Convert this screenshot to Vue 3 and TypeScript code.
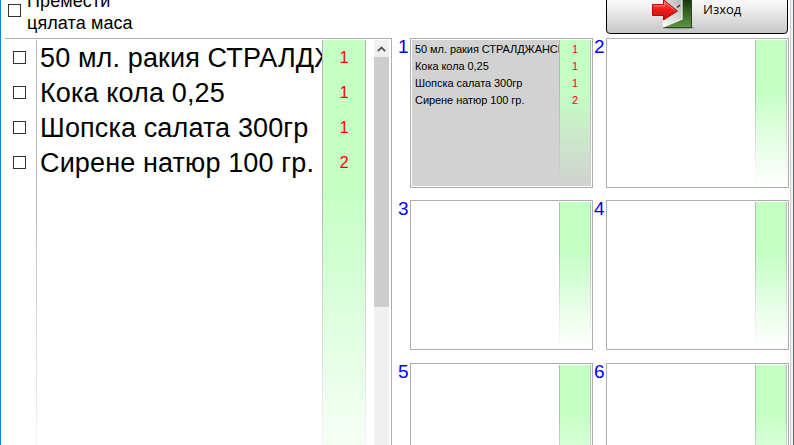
<script setup lang="ts">
interface OrderItem {
  name: string
  qty: number
}

interface Split {
  id: number
  items: OrderItem[]
}

const items: OrderItem[] = [
  { name: '50 мл. ракия СТРАЛДЖАНСКА', qty: 1 },
  { name: 'Кока кола 0,25', qty: 1 },
  { name: 'Шопска салата 300гр', qty: 1 },
  { name: 'Сирене натюр 100 гр.', qty: 2 },
]

const splits: Split[] = [1, 2, 3, 4, 5, 6].map((id) => ({ id, items: id === 1 ? items : [] }))
</script>

<template>
  <div class="window">
    <section class="left">
      <label class="move-all">
        <span class="box"></span>
        <span class="move-text">Премести<br />цялата маса</span>
      </label>
      <div class="order">
        <div class="checks">
          <div v-for="item in items" :key="item.name" class="check-row"><span class="box"></span></div>
        </div>
        <div class="names">
          <div v-for="item in items" :key="item.name" class="name">{{ item.name }}</div>
        </div>
        <div class="qty-col">
          <div v-for="item in items" :key="item.name" class="qty">{{ item.qty }}</div>
        </div>
        <div class="scrollbar">
          <div class="up">
            <svg width="9" height="6" viewBox="0 0 9 6"><path d="M0.8 5.2 L4.5 1.5 L8.2 5.2" fill="none" stroke="#555" stroke-width="1.9" /></svg>
          </div>
          <div class="thumb"></div>
        </div>
      </div>
    </section>
    <section class="right">
      <div class="toolbar">
        <button class="exit">
          <svg class="exit-icon" width="46" height="34" viewBox="0 0 46 34">
            <defs>
              <linearGradient id="green" x1="0" y1="0" x2="0" y2="1">
                <stop offset="0" stop-color="#17350d" />
                <stop offset="1" stop-color="#5c9440" />
              </linearGradient>
              <linearGradient id="door" x1="0" y1="1" x2="1" y2="0">
                <stop offset="0" stop-color="#ffffff" />
                <stop offset="1" stop-color="#b5b5b5" />
              </linearGradient>
              <linearGradient id="red" x1="0" y1="0" x2="0" y2="1">
                <stop offset="0" stop-color="#ff5a50" />
                <stop offset="0.5" stop-color="#ee1c1c" />
                <stop offset="1" stop-color="#c90c0c" />
              </linearGradient>
            </defs>
            <ellipse cx="28" cy="28.8" rx="16" ry="1.8" fill="#777" opacity="0.5" />
            <path d="M12 0H41V29H12Z" fill="#303f29" />
            <path d="M13 0H40V28H13Z" fill="url(#green)" />
            <path d="M12 0H31V20L12 28.5Z" fill="url(#door)" />
            <path d="M31 0V20L12.5 28" fill="none" stroke="#f1f5ed" stroke-width="1.2" />
            <path d="M26 8.5L29 6" stroke="#333" stroke-width="1.6" />
            <path d="M1.5 5.5H12.5V0.8L26.5 12L12.5 21V16.5H1.5Z" fill="url(#red)" stroke="#b30c0c" />
            <path d="M2.6 6.8H13.6V3L24 11.5" fill="none" stroke="#ff8880" stroke-width="0.8" />
          </svg>
          <span>Изход</span>
        </button>
      </div>
      <div class="grid">
        <div v-for="split in splits" :key="split.id" class="split">
          <div class="num">{{ split.id }}</div>
          <div class="card">
            <div class="card-body" :class="{ selected: split.id === 1 }">
              <div class="card-names">
                <div v-for="item in split.items" :key="item.name" class="small">{{ item.name }}</div>
              </div>
              <div class="card-qty">
                <div v-for="item in split.items" :key="item.name" class="small">{{ item.qty }}</div>
              </div>
            </div>
          </div>
        </div>
      </div>
    </section>
  </div>
</template>

<style>
body {
  margin: 0;
  overflow: hidden;
}
</style>

<style scoped>
* {
  box-sizing: border-box;
}
.window {
  width: 794px;
  height: 445px;
  overflow: hidden;
  display: flex;
  background: linear-gradient(#d0d0d0, #d0d0d0) 790px 0 / 1px 100% no-repeat,
    linear-gradient(#f0f0f0, #f0f0f0) 791px 0 / 2px 100% no-repeat, #fff;
  border-left: 1px solid #1883d7;
  border-right: 1px solid #1883d7;
  background-origin: border-box;
  font-family: 'Liberation Sans', Arial, sans-serif;
  color: #000;
}
.left {
  width: 391px;
  padding-left: 4px;
  flex: none;
}
.move-all {
  display: flex;
  height: 38px;
  padding-left: 3px;
}
.box {
  display: block;
  flex: none;
  width: 13px;
  height: 13px;
  border: 1px solid #333;
  background: #fff;
}
.move-all .box {
  margin-top: 4px;
}
.move-text {
  margin: -9px 0 0 6px;
  font-size: 18px;
  letter-spacing: 0.1px;
  line-height: 21.5px;
  white-space: nowrap;
}
.order {
  display: flex;
  height: 450px;
  border-top: 1px solid #abadb3;
  border-right: 1px solid #abadb3;
  padding: 1px 2px 0 0;
}
.checks {
  position: relative;
  width: 32px;
  flex: none;
}
.checks::after {
  content: '';
  position: absolute;
  top: 0;
  bottom: 0;
  right: 0;
  width: 1px;
  background: linear-gradient(#b8b8b8 35%, #fff);
}
.check-row {
  height: 35px;
  padding: 11px 0 0 8px;
}
.names {
  width: 285px;
  flex: none;
  padding-left: 3px;
  overflow: hidden;
}
.name {
  height: 35px;
  line-height: 37px;
  font-size: 27px;
  letter-spacing: 0.13px;
  white-space: nowrap;
}
.qty-col,
.card-qty {
  position: relative;
  isolation: isolate;
  text-align: center;
  color: #f00;
  flex: none;
}
.qty-col {
  width: 44px;
}
.qty-col::before,
.card-qty::before {
  content: '';
  position: absolute;
  inset: 0;
  z-index: -1;
  background: #c4ffc4;
  border: solid #b8b8b8;
  border-width: 0 1px;
  mask-image: linear-gradient(#000 33%, transparent);
}
.qty {
  height: 35px;
  line-height: 35px;
  font-size: 16.5px;
}
.scrollbar {
  width: 16px;
  margin-left: 8px;
  background: #f0f0f0;
}
.up {
  height: 17px;
  display: flex;
  align-items: center;
  justify-content: center;
}
.thumb {
  width: 15px;
  height: 250px;
  background: #cdcdcd;
}
.right {
  width: 397px;
  padding-left: 6px;
}
.toolbar {
  height: 38px;
  display: flex;
  padding-left: 208px;
}
.exit {
  width: 182px;
  height: 60px;
  margin-top: -26px;
  padding: 26px 0 0 44px;
  display: flex;
  align-items: flex-start;
  border: 1px solid #000;
  border-radius: 4px;
  background: linear-gradient(#fff 30%, #f2f2f2 55%, #c6c6c6);
  font: 13px/17px 'Open Sans', 'Noto Sans', sans-serif;
  color: #000;
}
.exit span {
  margin: 0 0 0 6px;
}
.exit-icon {
  flex: none;
  margin-top: -2px;
}
.grid {
  display: grid;
  grid-template-columns: 196px 196px;
  grid-template-rows: 162px 163px 150px;
}
.split {
  display: flex;
}
.num {
  width: 12px;
  flex: none;
  font-size: 19px;
  line-height: 18px;
  color: #00f;
}
.card {
  flex: none;
  width: 183px;
  height: 150px;
  border: 1px solid #abadb3;
  padding: 1px;
}
.card-body {
  display: flex;
  height: 146px;
  width: 179px;
}
.card-body.selected {
  background: #d2d2d2;
}
.card-names {
  width: 147px;
  padding-left: 3px;
  flex: none;
  overflow: hidden;
  white-space: nowrap;
}
.card-qty {
  width: 32px;
}
.small {
  height: 17px;
  font-size: 11px;
  line-height: 18px;
}
.card-names .small {
  letter-spacing: -0.06px;
}
</style>
